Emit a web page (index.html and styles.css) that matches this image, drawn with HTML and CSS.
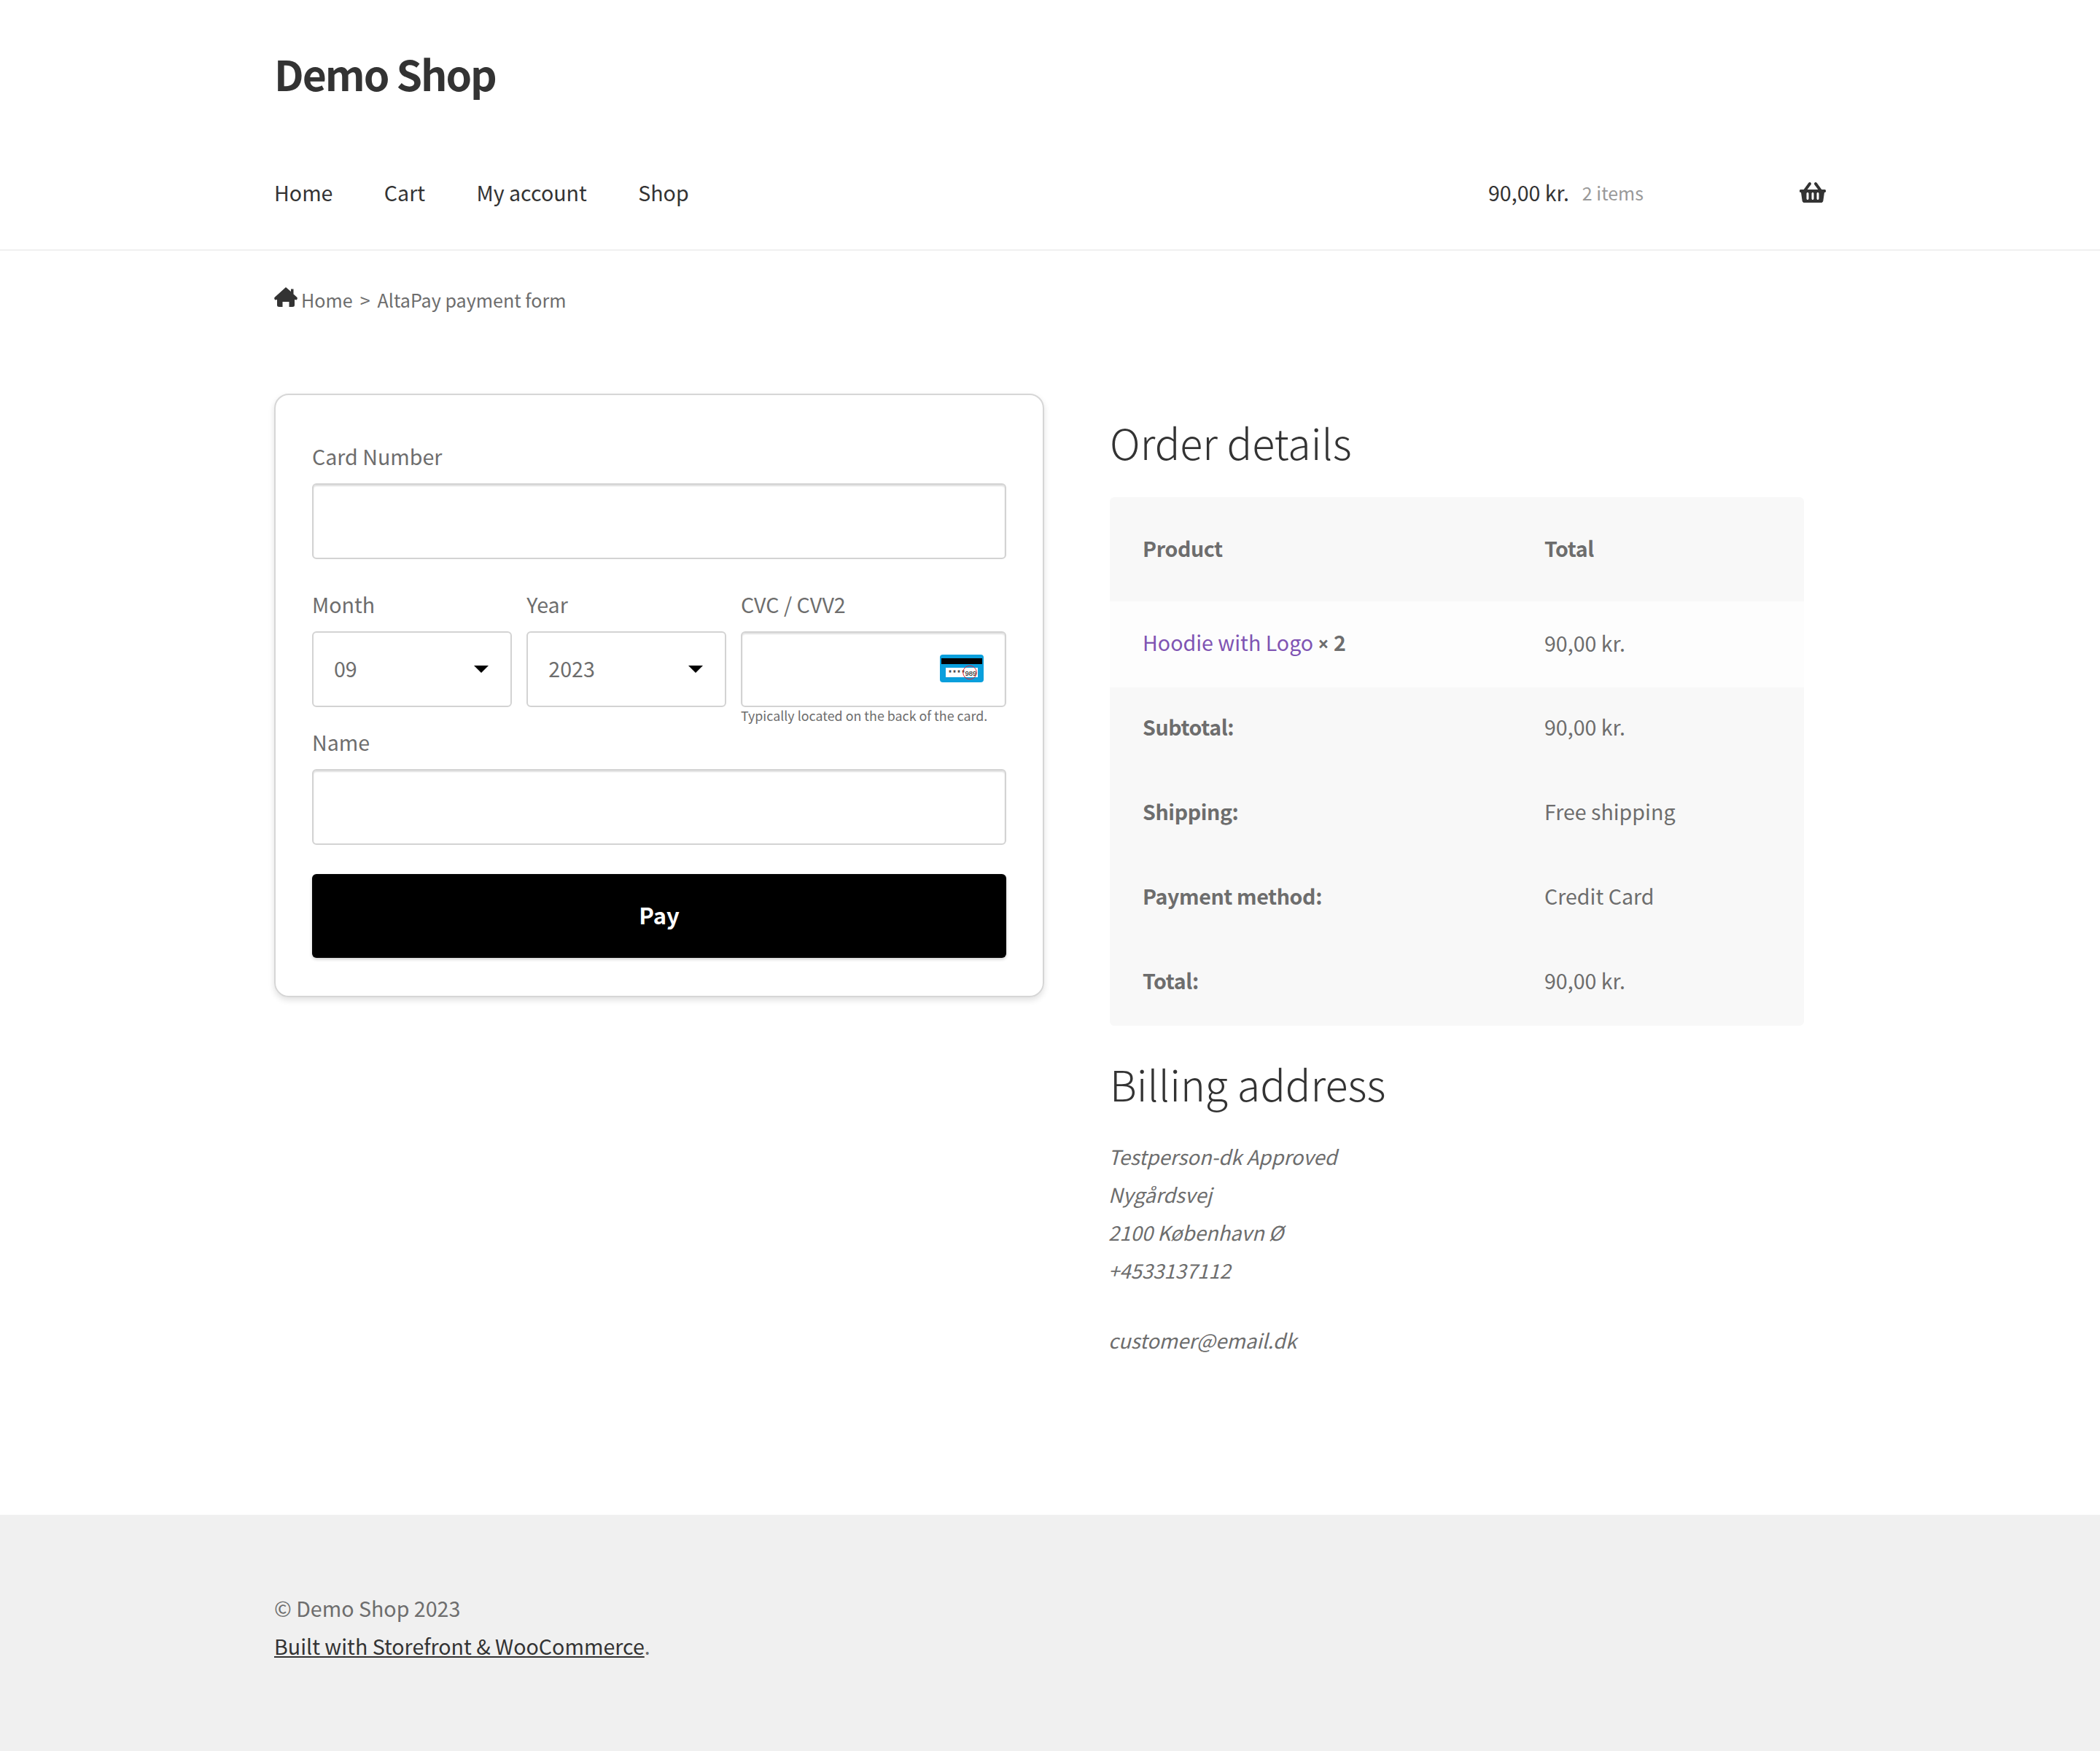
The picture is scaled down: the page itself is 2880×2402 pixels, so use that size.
FILE: index.html
```html
<!DOCTYPE html>
<html lang="en">
<head>
    <meta charset="UTF-8">
    <meta name="viewport" content="width=device-width, initial-scale=1.0">
    <title>AltaPay payment form - Demo Shop</title>
    <link rel="stylesheet" href="styles.css">
</head>
<body>
    <header class="site-header">
        <div class="col-full">
            <div class="site-title">Demo Shop</div>
            <nav class="main-nav">
                <ul class="nav-menu">
                    <li><a href="#">Home</a></li>
                    <li><a href="#">Cart</a></li>
                    <li><a href="#">My account</a></li>
                    <li><a href="#">Shop</a></li>
                </ul>
                <a class="site-cart" href="#">
                    <span class="cart-amount">90,00 kr.</span>
                    <span class="cart-count">2 items</span>
                    <svg class="cart-icon" viewBox="0 0 576 512"><path d="M576 216v16c0 13.255-10.745 24-24 24h-8l-26.113 182.788C514.509 462.435 494.257 480 470.37 480H105.63c-23.887 0-44.139-17.565-47.518-41.212L32 256h-8c-13.255 0-24-10.745-24-24v-16c0-13.255 10.745-24 24-24h67.341l106.78-146.821c10.395-14.292 30.407-17.453 44.701-7.058 14.293 10.395 17.453 30.408 7.058 44.701L170.477 192h235.046L326.12 82.821c-10.395-14.292-7.234-34.306 7.059-44.701 14.291-10.395 34.306-7.235 44.701 7.058L484.659 192H552c13.255 0 24 10.745 24 24zM312 392V280c0-13.255-10.745-24-24-24s-24 10.745-24 24v112c0 13.255 10.745 24 24 24s24-10.745 24-24zm112 0V280c0-13.255-10.745-24-24-24s-24 10.745-24 24v112c0 13.255 10.745 24 24 24s24-10.745 24-24zm-224 0V280c0-13.255-10.745-24-24-24s-24 10.745-24 24v112c0 13.255 10.745 24 24 24s24-10.745 24-24z"/></svg>
                </a>
            </nav>
        </div>
    </header>

    <div class="col-full">
        <nav class="breadcrumb">
            <svg class="home-icon" viewBox="0 0 32 27"><path d="M16 0 L23 6 V2.500 H26.500 V9.500 L31.500 14 Q32.500 16 30.500 17.500 L28 17 V24.500 Q28 27 25 27 H20.500 V20 H11.500 V27 H7 Q4 27 4 24.500 V17 L1.500 17.500 Q-.5 16 .5 14 Z"/></svg>
            <a href="#">Home</a>
            <span class="sep">&gt;</span>
            <span>AltaPay payment form</span>
        </nav>

        <main class="checkout">
            <form class="pay-card">
                <label class="field-label">Card Number</label>
                <input class="field" type="text">

                <div class="expiry-row">
                    <div>
                        <label class="field-label">Month</label>
                        <div class="select-wrap">
                            <select class="field"><option>09</option></select>
                        </div>
                    </div>
                    <div>
                        <label class="field-label">Year</label>
                        <div class="select-wrap">
                            <select class="field"><option>2023</option></select>
                        </div>
                    </div>
                    <div>
                        <label class="field-label">CVC / CVV2</label>
                        <div class="cvc-wrap">
                            <input class="field" type="text">
                            <svg class="cvc-icon" viewBox="0 0 60 38">
                                <rect width="60" height="38" rx="4" fill="#0a9fdc"/>
                                <rect x="2" y="5" width="56" height="8" fill="#000"/>
                                <rect x="8" y="18" width="44" height="13" fill="#fff"/>
                                <text x="11" y="29" class="cvc-stars">****</text>
                                <text x="34.500" y="28.500" class="cvc-code">989</text>
                                <circle cx="41" cy="24.5" r="9.3" fill="none" stroke="#e8232e" stroke-width="1"/>
                            </svg>
                        </div>
                        <div class="field-help">Typically located on the back of the card.</div>
                    </div>
                </div>

                <label class="field-label">Name</label>
                <input class="field" type="text">

                <button class="pay-button" type="button">Pay</button>
            </form>

            <section class="order-col">
                <h2>Order details</h2>
                <table class="order-table">
                    <thead>
                        <tr><th>Product</th><th>Total</th></tr>
                    </thead>
                    <tbody>
                        <tr class="item-row">
                            <td><a href="#">Hoodie with Logo</a> <strong class="qty"><span class="times">×</span> 2</strong></td>
                            <td>90,00 kr.</td>
                        </tr>
                    </tbody>
                    <tfoot>
                        <tr><th>Subtotal:</th><td>90,00 kr.</td></tr>
                        <tr><th>Shipping:</th><td>Free shipping</td></tr>
                        <tr><th>Payment method:</th><td>Credit Card</td></tr>
                        <tr><th>Total:</th><td>90,00 kr.</td></tr>
                    </tfoot>
                </table>

                <h2 class="billing-title">Billing address</h2>
                <address>
                    Testperson-dk Approved<br>
                    Nygårdsvej<br>
                    2100 København Ø<br>
                    +4533137112
                    <p>customer@email.dk</p>
                </address>
            </section>
        </main>
    </div>

    <footer class="site-footer">
        <div class="col-full">
            © Demo Shop 2023<br>
            <a href="#">Built with Storefront &amp; WooCommerce</a>.
        </div>
    </footer>
</body>
</html>
```

FILE: styles.css
```css
* {
    box-sizing: border-box;
}

body {
    margin: 0;
    font-family: "Noto Sans CJK SC", "Noto Sans", sans-serif;
    font-size: 28.6px;
    line-height: 52px;
    color: #6d6d6d;
    background-color: #fff;
}

a {
    color: inherit;
    text-decoration: none;
}

.col-full {
    width: 2128px;
    margin: 0 auto;
}

/* header */
.site-header {
    height: 344px;
    border-bottom: 2px solid #f0f0f0;
    color: #333;
}

.site-title {
    padding-top: 60px;
    font-size: 57px;
    line-height: 80px;
    font-weight: 700;
    letter-spacing: -2px;
}

.main-nav {
    display: flex;
    justify-content: space-between;
    align-items: center;
    margin-top: 98px;
}

.nav-menu {
    display: flex;
    gap: 70.4px;
    margin: 0;
    padding: 0;
    list-style: none;
}

.site-cart {
    display: flex;
    align-items: center;
    width: 463px;
}

.cart-count {
    margin-left: 18px;
    font-size: 25px;
    color: #999;
}

.cart-icon {
    width: 36px;
    height: 32px;
    margin-left: auto;
    fill: #333;
}

/* breadcrumb */
.breadcrumb {
    display: flex;
    align-items: center;
    gap: 9px;
    margin-top: 41px;
    font-size: 25.1px;
    line-height: 52px;
}

.home-icon {
    width: 32px;
    height: 27px;
    margin-top: -7px;
    margin-right: -4px;
    fill: #333;
}

.sep {
    margin: 0 1px;
}

/* layout */
.checkout {
    display: flex;
    gap: 90px;
    align-items: flex-start;
    margin-top: 103px;
}

/* payment form */
.pay-card {
    width: 1056px;
    padding: 58px 50px 52px;
    border: 2px solid #d6d6d6;
    border-radius: 20px;
    box-shadow: 0 4px 8px rgba(0, 0, 0, 0.12);
}

.field-label {
    display: block;
    margin-bottom: 11px;
}

.field {
    display: block;
    width: 100%;
    height: 104px;
    padding: 0 28px;
    border: 2px solid #d3d3d3;
    border-radius: 6px;
    font: inherit;
    color: #6d6d6d;
    background-color: #fff;
    box-shadow: inset 0 2px 2px rgba(0, 0, 0, 0.125);
}

select.field {
    padding-bottom: 3px;
    appearance: none;
    box-shadow: none;
}

.expiry-row {
    display: grid;
    grid-template-columns: 274px 273.4px 364px;
    column-gap: 20.3px;
    margin-top: 36px;
}

.select-wrap,
.cvc-wrap {
    position: relative;
}

.select-wrap::after {
    content: "";
    position: absolute;
    top: 47px;
    right: 32px;
    border-style: solid;
    border-width: 10px 10px 0;
    border-color: #000 transparent transparent;
}

.cvc-icon {
    position: absolute;
    top: 32px;
    right: 31px;
    width: 60px;
    height: 38px;
}

.cvc-stars {
    font-size: 10px;
    font-family: "Liberation Mono", monospace;
}

.cvc-code {
    font-size: 9.5px;
    font-family: "Liberation Sans", sans-serif;
}

.field-help {
    font-size: 17.85px;
    line-height: 22px;
    white-space: nowrap;
}

.pay-button {
    display: block;
    width: 100%;
    height: 115px;
    margin-top: 40px;
    padding: 0 0 3px;
    border: 0;
    border-radius: 6px;
    font: inherit;
    font-size: 31px;
    font-weight: 700;
    color: #fff;
    background-color: #000;
    box-shadow: 0 2px 4px rgba(0, 0, 0, 0.2);
}

/* order details */
.order-col {
    width: 952px;
    padding-top: 15px;
}

h2 {
    margin: 0 0 25px;
    font-size: 57.4px;
    line-height: 102px;
    font-weight: 300;
    color: #333;
}

.order-table {
    width: 100%;
    border-collapse: collapse;
    background-color: #f8f8f8;
    border-radius: 6px;
}

.order-table th,
.order-table td {
    padding: 30px 45px 34px;
    text-align: left;
}

.order-table tfoot th,
.order-table tfoot td {
    padding-top: 28.500px;
    padding-bottom: 35.500px;
}

.order-table th {
    font-weight: 700;
    letter-spacing: -0.4px;
}

.order-table th:first-child,
.order-table td:first-child {
    width: 551px;
}

.order-table thead th {
    padding-top: 44px;
    padding-bottom: 46.6px;
}

.item-row {
    background-color: #fdfdfd;
}

.item-row a {
    color: #7f54b3;
}

.times {
    font-family: "Noto Sans", sans-serif;
    font-size: 26px;
}

.billing-title {
    margin-top: 28px;
    margin-bottom: 23px;
}

address {
    margin-left: -2px;
    font-size: 27.5px;
    font-style: italic;
}

address p {
    margin: 44px 0 0;
}

/* footer */
.site-footer {
    height: 325px;
    margin-top: 214px;
    padding-top: 102px;
    background-color: #f0f0f0;
}

.site-footer a {
    color: #333;
    text-decoration: underline;
}
```
